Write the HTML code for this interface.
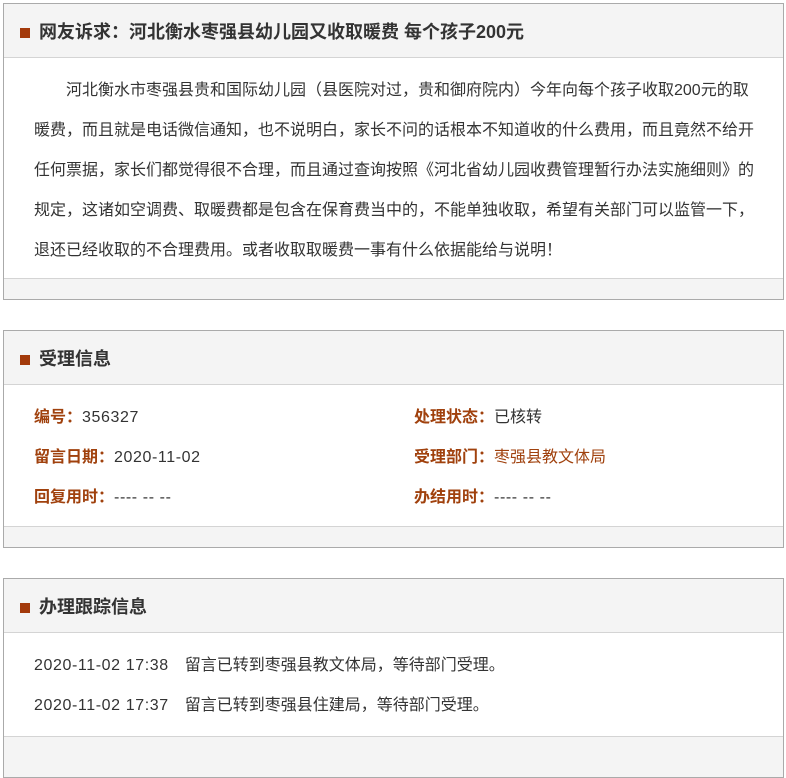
<!DOCTYPE html>
<html><head><meta charset="utf-8"><style>
*{margin:0;padding:0;box-sizing:border-box}
body{width:786px;height:739px;background:#fff;font-family:"Liberation Sans","Microsoft YaHei","Noto Sans CJK SC",sans-serif;color:#333;font-size:16px;overflow:hidden;position:relative}
.p{position:absolute;left:3px;width:781px;border:1px solid #aaa;background:#f4f4f4}
.h{height:54px;border-bottom:1px solid #d4d4d4;font-size:18px;font-weight:bold;line-height:56px;padding-left:35px;position:relative;color:#333}
.h:before{content:"";position:absolute;left:16px;top:24px;width:10px;height:10px;background:#a33a0b}
.b{background:#fff;border-bottom:1px solid #d4d4d4}
.t{padding:13px 30px 10px 30px;line-height:40px;white-space:nowrap}
.r{height:40px;line-height:40px;position:relative;padding-left:30px}
.r span.c2{position:absolute;left:410px}
.l{color:#a0410d;font-weight:bold}
.br{color:#a0410d}
.n{letter-spacing:0.6px}
</style></head><body>
<div class="p" style="top:3px;height:297px">
<div class="h">网友诉求：河北衡水枣强县幼儿园又收取暖费 每个孩子200元</div>
<div class="b t" style="height:221px">&emsp;&emsp;河北衡水市枣强县贵和国际幼儿园（县医院对过，贵和御府院内）今年向每个孩子收取200元的取<br>暖费，而且就是电话微信通知，也不说明白，家长不问的话根本不知道收的什么费用，而且竟然不给开<br>任何票据，家长们都觉得很不合理，而且通过查询按照《河北省幼儿园收费管理暂行办法实施细则》的<br>规定，这诸如空调费、取暖费都是包含在保育费当中的，不能单独收取，希望有关部门可以监管一下，<br>退还已经收取的不合理费用。或者收取取暖费一事有什么依据能给与说明！</div>
</div>
<div class="p" style="top:330px;height:218px">
<div class="h">受理信息</div>
<div class="b" style="height:142px;padding-top:13px">
<div class="r"><span class="l">编号：</span><span class="n">356327</span><span class="c2"><span class="l">处理状态：</span>已核转</span></div>
<div class="r"><span class="l">留言日期：</span><span class="n">2020-11-02</span><span class="c2"><span class="l">受理部门：</span><span class="br">枣强县教文体局</span></span></div>
<div class="r"><span class="l">回复用时：</span><span class="n">---- -- --</span><span class="c2"><span class="l">办结用时：</span><span class="n">---- -- --</span></span></div>
</div>
</div>
<div class="p" style="top:578px;height:200px">
<div class="h">办理跟踪信息</div>
<div class="b" style="height:104px;padding-top:13px">
<div class="r"><span class="n">2020-11-02 17:38</span>&emsp;留言已转到枣强县教文体局，等待部门受理。</div>
<div class="r"><span class="n">2020-11-02 17:37</span>&emsp;留言已转到枣强县住建局，等待部门受理。</div>
</div>
</div>
</body></html>
